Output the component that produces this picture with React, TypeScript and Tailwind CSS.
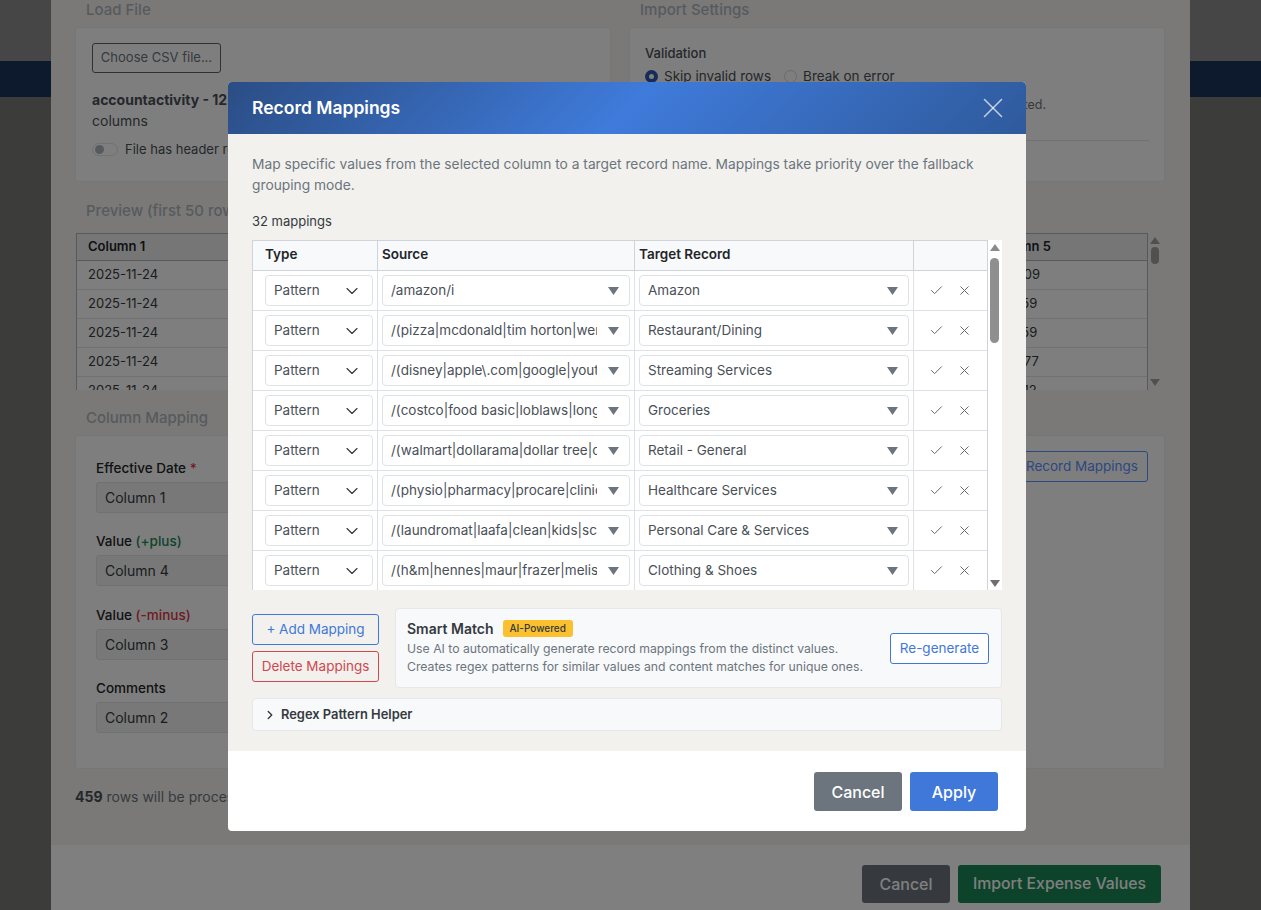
import { Check, ChevronDown, ChevronRight, X } from "lucide-react";

const mappings = [
  { source: "/amazon/i", target: "Amazon" },
  { source: "/(pizza|mcdonald|tim horton|wendy|subway)/i", target: "Restaurant/Dining" },
  { source: "/(disney|apple\\.com|google|youtube|netflix)/i", target: "Streaming Services" },
  { source: "/(costco|food basic|loblaws|longos|metro)/i", target: "Groceries" },
  { source: "/(walmart|dollarama|dollar tree|canadian tire)/i", target: "Retail - General" },
  { source: "/(physio|pharmacy|procare|clinic|dental)/i", target: "Healthcare Services" },
  { source: "/(laundromat|laafa|clean|kids|school|salon)/i", target: "Personal Care & Services" },
  { source: "/(h&m|hennes|maur|frazer|melissa|winners)/i", target: "Clothing & Shoes" },
];

const previewRows = ["$210.09", "$118.59", "$118.59", "$136.77", "$142.12"];

const columnFields = [
  { label: "Effective Date", note: "*", noteClass: "text-[#dc3545]", value: "Column 1", mb: "mb-[18px]" },
  { label: "Value", note: "(+plus)", noteClass: "text-[#198754]", value: "Column 4", mb: "mb-[19px]" },
  { label: "Value", note: "(-minus)", noteClass: "text-[#dc3545]", value: "Column 3", mb: "mb-[18px]" },
  { label: "Comments", note: "", noteClass: "", value: "Column 2", mb: "" },
];

function Caret() {
  return (
    <svg viewBox="0 0 11 8" className="h-[8px] w-[11px] shrink-0 fill-[#6c757d]">
      <polygon points="0,0 11,0 5.5,8" />
    </svg>
  );
}

function ComboBox({ value, className }: { value: string; className: string }) {
  return (
    <div className={`flex h-[31px] items-center rounded-[4px] border border-[#dee2e6] bg-white pl-[8px] pr-[10px] ${className}`}>
      <span className="min-w-0 flex-1 overflow-hidden whitespace-nowrap text-[#495057]">{value}</span>
      <span className="ml-[11px]">
        <Caret />
      </span>
    </div>
  );
}

function MappingRow({ source, target }: { source: string; target: string }) {
  return (
    <div className="flex h-[40px] border-b border-[#dee2e6] text-[13.5px]">
      <div className="flex w-[125px] items-center border-r border-[#dee2e6] pl-[12px]">
        <div className="flex h-[31px] w-[108px] items-center justify-between rounded-[4px] border border-[#dee2e6] bg-white pl-[8px] pr-[10px] text-[#495057]">
          Pattern
          <ChevronDown className="h-[20px] w-[20px] text-[#343a40]" strokeWidth={1.4} />
        </div>
      </div>
      <div className="flex w-[257px] items-center border-r border-[#dee2e6] pl-[4px]">
        <ComboBox value={source} className="w-[248px]" />
      </div>
      <div className="flex w-[279px] items-center border-r border-[#dee2e6] pl-[4px]">
        <ComboBox value={target} className="w-[270px]" />
      </div>
      <div className="flex flex-1 items-center gap-[13px] pl-[15px] text-[#62696f]">
        <Check className="h-[15px] w-[15px]" strokeWidth={1.6} />
        <X className="h-[15px] w-[15px]" strokeWidth={1.6} />
      </div>
    </div>
  );
}

function RecordMappingsModal() {
  return (
    <div className="absolute left-[228px] top-[82px] flex h-[749px] w-[798px] flex-col overflow-hidden rounded-[4px] bg-white">
      <div className="flex h-[52px] shrink-0 items-center justify-between bg-linear-135 from-[#2b4d84] via-[#3f7bdb] to-[#2f5a9c] pl-[24px] pr-[16px]">
        <h2 className="text-[17.5px] font-semibold text-white">Record Mappings</h2>
        <X className="h-[34px] w-[34px] text-white/70" strokeWidth={1.1} />
      </div>

      <div className="h-[617px] shrink-0 bg-[#f2f1ee] px-[24px] pt-[20px]">
        <p className="w-[740px] text-[13.77px] leading-[21px] text-[#6c757d]">
          Map specific values from the selected column to a target record name. Mappings take priority over the fallback
          grouping mode.
        </p>
        <p className="mt-[15px] text-[13px] leading-[20px] text-[#343a40]">32 mappings</p>

        <div className="mt-[9px] flex h-[350px]">
          <div className="h-full w-[736px] overflow-hidden border-x border-t border-[#ced4da] bg-white">
            <div className="flex h-[30px] border-b border-[#ced4da] bg-[#f8f9fa] text-[13.5px] font-semibold leading-[26px] text-[#212529]">
              <div className="w-[125px] border-r border-[#ced4da] pl-[12px]">Type</div>
              <div className="w-[257px] border-r border-[#ced4da] pl-[4px]">Source</div>
              <div className="w-[279px] border-r border-[#ced4da] pl-[4px]">Target Record</div>
            </div>
            {mappings.map((m) => (
              <MappingRow key={m.target} source={m.source} target={m.target} />
            ))}
          </div>
          <div className="flex h-full w-[14px] flex-col items-center bg-white pr-[1px] pt-[4px]">
            <svg viewBox="0 0 10 7" className="h-[7px] w-[10px] fill-[#8a8a8a]">
              <polygon points="5,0 10,7 0,7" />
            </svg>
            <div className="mt-[7px] h-[85px] w-[9px] rounded-full bg-[#8f8f8f]" />
            <svg viewBox="0 0 10 7" className="mt-auto mb-[3px] h-[7px] w-[10px] fill-[#6f6f6f]">
              <polygon points="0,0 10,0 5,7" />
            </svg>
          </div>
        </div>

        <div className="mt-[18px] flex gap-[16px]">
          <div className="flex w-[127px] flex-col gap-[6px] pt-[6px]">
            <button className="h-[31px] rounded-[3px] border border-[#3f78d8] text-[13.5px] text-[#3f78d8]">+ Add Mapping</button>
            <button className="h-[31px] rounded-[3px] border border-[#d0484f] text-[13.5px] text-[#d0484f]">Delete Mappings</button>
          </div>
          <div className="flex h-[80px] w-[607px] items-center justify-between rounded-[4px] border border-[#e5e7ea] bg-[#f8f9fa] pl-[11px] pr-[12px]">
            <div className="pb-[2px]">
              <div className="flex items-center gap-[9px]">
                <span className="text-[14px] font-semibold text-[#343a40]">Smart Match</span>
                <span className="rounded-[3px] bg-[#fbc02d] px-[7px] py-[1px] text-[10px] font-medium leading-[15px] text-[#343a40]">AI-Powered</span>
              </div>
              <p className="mt-[1px] text-[12.24px] leading-[18px] text-[#6c757d]">
                Use AI to automatically generate record mappings from the distinct values.
                <br />
                Creates regex patterns for similar values and content matches for unique ones.
              </p>
            </div>
            <button className="h-[31px] w-[99px] rounded-[3px] border border-[#3f78d8] bg-white text-[13.5px] text-[#3f78d8]">Re-generate</button>
          </div>
        </div>

        <div className="mt-[10px] flex h-[33px] items-center gap-[4px] rounded-[4px] border border-[#e5e7ea] bg-[#f8f9fa] pl-[10px] text-[12.9px] font-semibold text-[#343a40]">
          <ChevronRight className="h-[14px] w-[14px]" strokeWidth={2.4} />
          Regex Pattern Helper
        </div>
      </div>

      <div className="flex flex-1 items-start justify-end gap-[8px] pr-[28px] pt-[21px]">
        <button className="h-[39px] w-[88px] rounded-[3px] bg-[#6c757d] text-[16px] font-medium text-white">Cancel</button>
        <button className="h-[39px] w-[88px] rounded-[3px] bg-[#3f78d8] text-[16px] font-medium text-white">Apply</button>
      </div>
    </div>
  );
}

function ImportDialog() {
  return (
    <div className="absolute left-[51px] top-0 flex h-[910px] w-[1139px] flex-col bg-[#f4f3f0]">
      <div className="flex-1 pl-[24px] pr-[25px]">
        <div className="grid grid-cols-[536px_536px] gap-[18px]">
          <div>
            <h3 className="h-[27px] pl-[11px] text-[15px] font-medium leading-[19px] text-[#adb5bd]">Load File</h3>
            <div className="h-[155px] rounded-[3px] border border-[#e9ecef] bg-[#fdfdfc] pl-[16px] pt-[15px]">
              <div className="flex h-[30px] w-[129px] items-center justify-center rounded-[3px] border border-[#5c636a] text-[13px] text-[#6c757d]">
                Choose CSV file...
              </div>
              <p className="mt-[16px] text-[14px] leading-[21px] text-[#495057]">
                <b>accountactivity - 12.csv</b>
                <br />
                columns
              </p>
              <div className="mt-[9px] flex items-center gap-[7px] text-[13px] text-[#495057]">
                <span className="flex h-[13px] w-[26px] items-center rounded-full border border-[#dee2e6] pl-[2px]">
                  <span className="h-[9px] w-[9px] rounded-full bg-[#adb5bd]" />
                </span>
                File has header row
              </div>
            </div>
          </div>
          <div>
            <h3 className="h-[27px] pl-[11px] text-[15px] font-medium leading-[19px] text-[#adb5bd]">Import Settings</h3>
            <div className="h-[155px] rounded-[3px] border border-[#e9ecef] bg-[#fdfdfc] px-[15px] pt-[16px]">
              <p className="text-[13px] font-medium leading-[18px] text-[#495057]">Validation</p>
              <div className="mt-[5px] flex items-center text-[13.5px] leading-[18px] text-[#495057]">
                <span className="h-[13px] w-[13px] rounded-full border-[4px] border-[#2a58b0] bg-white" />
                <span className="ml-[6px]">Skip invalid rows</span>
                <span className="ml-[13px] h-[13px] w-[13px] rounded-full border border-[#ced4da]" />
                <span className="ml-[6px]">Break on error</span>
              </div>
              <p className="mt-[11px] w-[401px] whitespace-nowrap text-right text-[12.5px] leading-[18px] text-[#6c757d]">
                Rows with errors will be skipped and reported.
              </p>
              <div className="mt-[26px] border-t border-[#dee2e6]" />
            </div>
          </div>
        </div>

        <h3 className="mt-[19px] h-[32px] pl-[11px] text-[15px] font-medium leading-[19px] text-[#adb5bd]">Preview (first 50 rows)</h3>
        <div className="ml-[1px] flex h-[157px]">
          <div className="w-[1072px] overflow-hidden border-x border-t border-[#adb5bd] bg-[#fdfdfc] text-[13px] text-[#343a40]">
            <div className="flex h-[27px] items-center border-b border-[#adb5bd] bg-[#eceded] font-semibold text-[#212529]">
              <div className="flex-1 pl-[11px]">Column 1</div>
              <div className="w-[156px]">Column 5</div>
            </div>
            {previewRows.map((v, i) => (
              <div key={i} className="flex h-[29px] items-center border-b border-[#dee2e6]">
                <div className="flex-1 pl-[11px]">2025-11-24</div>
                <div className="w-[156px]">{v}</div>
              </div>
            ))}
          </div>
          <div className="flex w-[14px] flex-col items-center pt-[4px]">
            <svg viewBox="0 0 10 7" className="h-[7px] w-[10px] fill-[#a0a0a0]">
              <polygon points="5,0 10,7 0,7" />
            </svg>
            <div className="mt-[3px] h-[17px] w-[8px] rounded-full bg-[#a0a0a0]" />
            <svg viewBox="0 0 10 7" className="mt-auto mb-[4px] h-[7px] w-[10px] fill-[#a0a0a0]">
              <polygon points="0,0 10,0 5,7" />
            </svg>
          </div>
        </div>

        <h3 className="mt-[18px] h-[27px] pl-[11px] text-[15px] font-medium leading-[19px] text-[#adb5bd]">Column Mapping</h3>
        <div className="flex h-[334px] justify-between rounded-[3px] border border-[#e9ecef] bg-[#fdfdfc] pl-[20px] pr-[16px]">
          <div className="w-[500px] pt-[22px]">
            {columnFields.map((f) => (
              <div key={f.value} className={f.mb}>
                <p className="text-[13.5px] font-medium leading-[20px] text-[#212529]">
                  {f.label} <span className={f.noteClass}>{f.note}</span>
                </p>
                <div className="mt-[4px] flex h-[31px] items-center rounded-[3px] border border-[#dee2e6] bg-[#f1f1f1] pl-[8px] text-[14px] text-[#343a40]">
                  {f.value}
                </div>
              </div>
            ))}
          </div>
          <button className="mt-[15px] h-[31px] rounded-[3px] border border-[#5a90ff] px-[9px] text-[13.5px] text-[#5a90ff]">Edit Record Mappings</button>
        </div>
        <p className="mt-[17px] text-[14px] leading-[21px] text-[#6c757d]">
          <b className="text-[#495057]">459</b> rows will be processed
        </p>
      </div>
      <div className="flex h-[65px] items-start justify-end gap-[8px] bg-white pr-[29px] pt-[20px]">
        <button className="h-[38px] w-[88px] rounded-[3px] bg-[#6c757d] text-[16px] font-medium text-white">Cancel</button>
        <button className="h-[38px] w-[203px] rounded-[3px] bg-[#198754] text-[15.8px] font-medium text-white">Import Expense Values</button>
      </div>
    </div>
  );
}

export default function App() {
  return (
    <div className="relative h-[910px] w-[1261px] overflow-hidden bg-[#797975] font-[family-name:Inter,sans-serif]">
      <div className="h-[61px] bg-[#8d8d8d]" />
      <div className="h-[36px] bg-[#1a345c]" />
      <ImportDialog />
      <div className="absolute inset-0 bg-black/50" />
      <RecordMappingsModal />
    </div>
  );
}
